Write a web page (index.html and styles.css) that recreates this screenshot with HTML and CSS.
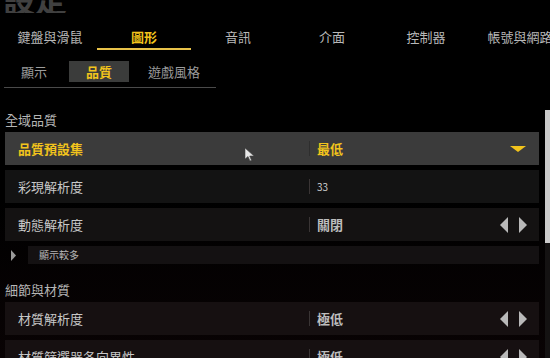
FILE: index.html
```html
<!DOCTYPE html>
<html lang="zh-Hant">
<head>
<meta charset="utf-8">
<link rel="stylesheet" href="styles.css">
</head>
<body>
<div class="page">
  <div class="title"><span>設定</span></div>
  <nav class="tabs">
    <div class="tab">鍵盤與滑鼠</div>
    <div class="tab active">圖形</div>
    <div class="tab">音訊</div>
    <div class="tab">介面</div>
    <div class="tab">控制器</div>
    <div class="tab">帳號與網路</div>
  </nav>
  <nav class="subtabs">
    <div class="subtab w60">顯示</div>
    <div class="subtab w60 active">品質</div>
    <div class="subtab w80">遊戲風格</div>
  </nav>

  <div class="section-title s1">全域品質</div>
  <div class="rows">
    <div class="row hl">
      <div class="label">品質預設集</div>
      <div class="value"><span class="sep"></span><span class="vtext gold">最低</span>
        <svg class="dd" width="16" height="6" viewBox="0 0 16 6"><polygon points="0,0 16,0 8,6" fill="#f2c41c"/></svg>
      </div>
    </div>
    <div class="row r2">
      <div class="label">彩現解析度</div>
      <div class="value"><span class="sep"></span><span class="vtext small">33</span></div>
    </div>
    <div class="row r3">
      <div class="label">動態解析度</div>
      <div class="value"><span class="sep"></span><span class="vtext">關閉</span>
        <span class="arrows">
          <svg width="8" height="16" viewBox="0 0 8 16"><polygon points="8,0 8,16 0,8" fill="#b9b9b9"/></svg>
          <svg width="8" height="16" viewBox="0 0 8 16"><polygon points="0,0 0,16 8,8" fill="#b9b9b9"/></svg>
        </span>
      </div>
    </div>
    <div class="more">
      <svg class="more-arrow" width="5" height="11" viewBox="0 0 5 11"><polygon points="0,0 5,5.5 0,11" fill="#9a9a9a"/></svg>
      <div class="more-box">顯示較多</div>
    </div>
  </div>

  <div class="section-title s2">細節與材質</div>
  <div class="rows">
    <div class="row r4">
      <div class="label">材質解析度</div>
      <div class="value"><span class="sep"></span><span class="vtext">極低</span>
        <span class="arrows">
          <svg width="8" height="16" viewBox="0 0 8 16"><polygon points="8,0 8,16 0,8" fill="#b9b9b9"/></svg>
          <svg width="8" height="16" viewBox="0 0 8 16"><polygon points="0,0 0,16 8,8" fill="#b9b9b9"/></svg>
        </span>
      </div>
    </div>
    <div class="row r4">
      <div class="label">材質篩選器各向異性</div>
      <div class="value"><span class="sep"></span><span class="vtext">極低</span>
        <span class="arrows">
          <svg width="8" height="16" viewBox="0 0 8 16"><polygon points="8,0 8,16 0,8" fill="#b9b9b9"/></svg>
          <svg width="8" height="16" viewBox="0 0 8 16"><polygon points="0,0 0,16 8,8" fill="#b9b9b9"/></svg>
        </span>
      </div>
    </div>
  </div>

  <div class="scrollbar"><div class="thumb"></div></div>
  <svg class="cursor" width="11" height="14" viewBox="0 0 11 14"><polygon points="0,0 0,11 3,8.5 5,13 6.5,12.3 4.7,8 9,8" fill="#e8e8e8" stroke="#444" stroke-width="0.6"/></svg>
</div>
</body>
</html>
```

FILE: styles.css
```css
* { box-sizing: border-box; }
html, body { margin: 0; padding: 0; }
body {
  width: 550px;
  height: 358px;
  overflow: hidden;
  background: linear-gradient(#000 0, #000 200px, #090304 358px);
  font-family: "Noto Sans CJK TC", "Noto Sans", sans-serif;
  color: #c6c6c6;
}
.page {
  position: relative;
  width: 550px;
  height: 358px;
  overflow: hidden;
}
.title {
  height: 13px;
  overflow: hidden;
  display: flex;
  align-items: flex-end;
  padding-left: 3px;
}
.title span {
  font-size: 32px;
  line-height: 32px;
  color: #404040;
  font-weight: 700;
  flex-shrink: 0;
  margin-bottom: -1px;
}
.tabs {
  display: flex;
  padding-left: 3px;
  margin-top: 14px;
}
.tab {
  width: 94px;
  flex-shrink: 0;
  text-align: center;
  font-size: 13px;
  line-height: 20px;
  height: 23px;
  color: #b8b8b8;
  white-space: nowrap;
  border-bottom: 2px solid transparent;
}
.tab.active {
  color: #f2c41c;
  font-weight: 700;
  border-bottom-color: #e9c34a;
}
.subtabs {
  display: flex;
  gap: 5px;
  margin-left: 4px;
  margin-top: 11px;
  width: 212px;
  padding-bottom: 5px;
  border-bottom: 1px solid #4a4a4a;
}
.subtab {
  height: 21px;
  line-height: 21px;
  font-size: 13px;
  text-align: center;
  color: #9c9c9c;
}
.w60 { width: 60px; }
.w80 { width: 80px; }
.subtab.active {
  background: #3b3c3b;
  color: #f2c41c;
  font-weight: 700;
}
.section-title {
  font-size: 13px;
  line-height: 15px;
  color: #b5b5b5;
  padding-left: 5px;
}
.s1 { margin-top: 24px; }
.s2 { margin-top: 18px; }
.rows {
  display: flex;
  flex-direction: column;
  gap: 5px;
  margin-top: 5px;
  padding-left: 5px;
  width: 539px;
}
.row {
  height: 33px;
  display: flex;
  align-items: center;
  font-size: 13px;
}
.row.hl { background: #3b3b3b; }
.row.r2 { background: #131313; }
.row.r3 { background: #141212; }
.row.r4 { background: #161011; }
.label {
  width: 304px;
  padding-left: 13px;
  color: #c8c8c8;
  white-space: nowrap;
}
.row.hl .label { color: #f2c41c; font-weight: 700; }
.value {
  flex: 1;
  display: flex;
  align-items: center;
  height: 100%;
  padding-right: 13px;
}
.sep {
  width: 1px;
  height: 15px;
  background: #3a3535;
  margin-right: 7px;
}
.row.hl .sep { background: #2e2e2e; }
.vtext { color: #bdbdbd; font-weight: 700; }
.vtext.gold { color: #f2c41c; }
.vtext.small { font-size: 10px; font-weight: 400; color: #cfcfcf; }
.dd { margin-left: auto; margin-top: 1px; }
.arrows {
  margin-left: auto;
  display: flex;
  gap: 11px;
  margin-right: -1px;
}
.more {
  display: flex;
  align-items: center;
  height: 18px;
}
.more-arrow { margin-left: 6px; margin-right: 12px; }
.more-box {
  flex: 1;
  height: 18px;
  background: #141112;
  font-size: 10px;
  line-height: 18px;
  color: #b4b4b4;
  padding-left: 11px;
}
.scrollbar {
  position: absolute;
  left: 545px;
  top: 110px;
  width: 5px;
  height: 248px;
  background: #141212;
}
.thumb {
  height: 133px;
  background: #cbcbcb;
}
.cursor {
  position: absolute;
  left: 245px;
  top: 148px;
}
```
